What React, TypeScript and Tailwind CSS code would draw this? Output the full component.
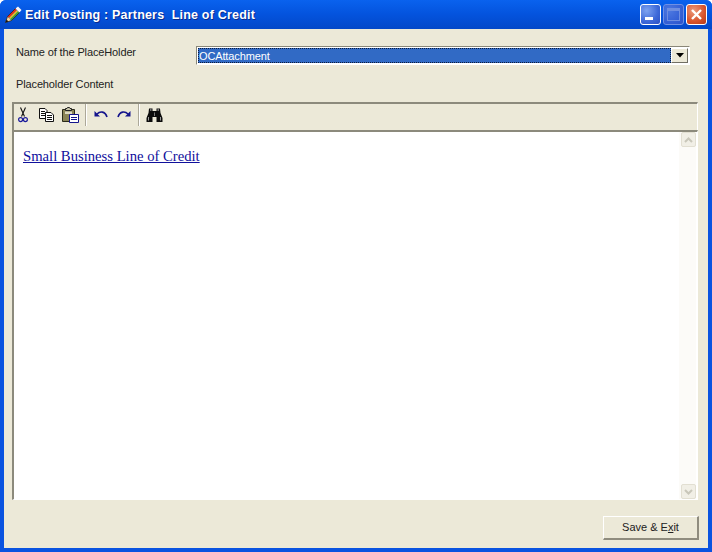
import React from "react";

const sans = "font-['Liberation_Sans',Arial,sans-serif]";

function PencilIcon() {
  return (
    <svg width="17" height="17" viewBox="0 0 17 17" className="shrink-0">
      <path d="M0.5 16.5 L2.5 10.5 L6.5 14.5 Z" fill="#f3d6a6" />
      <path d="M2.5 10.5 L10.5 2.5 L12 4 L4 12 Z" fill="#e5301a" />
      <path d="M4 12 L12 4 L13.2 5.2 L5.2 13.2 Z" fill="#f4c31c" />
      <path d="M5.2 13.2 L13.2 5.2 L14.5 6.5 L6.5 14.5 Z" fill="#3fa63a" />
      <path d="M10.5 2.5 L13 0.5 L16.5 4 L14.5 6.5 Z" fill="#f6f6f6" />
      <path d="M0.5 16.5 L1.5 13.5 L3.5 15.5 Z" fill="#111111" />
      <path d="M0.5 16.5 L2.5 10.5 L10.5 2.5 M0.5 16.5 L6.5 14.5 L14.5 6.5" stroke="#2a2010" strokeWidth="0.7" fill="none" />
    </svg>
  );
}

function CaptionButton({ kind }: { kind: "min" | "max" | "close" }) {
  if (kind === "close") {
    return (
      <div className="w-[21px] h-[21px] rounded-[3px] border border-white bg-[radial-gradient(circle_at_35%_30%,#eb9a7c,#d8532c_60%,#b53a18)] flex items-center justify-center">
        <svg width="13" height="13" viewBox="0 0 13 13">
          <path d="M2 2 L11 11 M11 2 L2 11" stroke="#ffffff" strokeWidth="2.4" />
        </svg>
      </div>
    );
  }
  if (kind === "min") {
    return (
      <div className="w-[21px] h-[21px] rounded-[3px] border border-white bg-[radial-gradient(circle_at_30%_30%,#7ea3f0,#3c68d8_60%,#2a50c4)] flex items-end pl-[4px] pb-[4px]">
        <div className="w-[8px] h-[3px] bg-white" />
      </div>
    );
  }
  return (
    <div className="w-[21px] h-[21px] rounded-[3px] border border-[#6f90e4] bg-[radial-gradient(circle_at_30%_30%,#4d78e0,#3561d6_60%,#2b52c8)] flex items-center justify-center">
      <div className="w-[13px] h-[13px] border border-[#6f8ee0] border-t-[3px]" />
    </div>
  );
}

function CutIcon() {
  return (
    <svg width="10" height="16" viewBox="0 0 10 16">
      <path d="M2.5 0.5 L6.5 9.5 M7.5 0.5 L3.5 9.5" stroke="#111111" strokeWidth="1.1" fill="none" />
      <circle cx="2.6" cy="12.6" r="2" stroke="#1c1c9c" strokeWidth="1.2" fill="none" />
      <circle cx="7.4" cy="12.6" r="2" stroke="#1c1c9c" strokeWidth="1.2" fill="none" />
    </svg>
  );
}

function CopyIcon() {
  return (
    <svg width="15" height="14" viewBox="0 0 15 14">
      <path d="M0.5 0.5 H6 L8 2.5 V10.5 H0.5 Z" fill="#ffffff" stroke="#111111" />
      <path d="M2 3.5 H6 M2 5.5 H6 M2 7.5 H6" stroke="#111111" />
      <path d="M6.5 4.5 H12 L14.5 7 V13.5 H6.5 Z" fill="#ffffff" stroke="#111111" />
      <path d="M8 7.5 H13 M8 9.5 H13 M8 11.5 H13" stroke="#111111" />
    </svg>
  );
}

function PasteIcon() {
  return (
    <svg width="17" height="16" viewBox="0 0 17 16">
      <path d="M0.5 2.5 H12.5 V14.5 H0.5 Z" fill="#8a8456" stroke="#2a2a18" />
      <path d="M3.5 3.5 V1.5 H5 L5.5 0.5 H7.5 L8 1.5 H9.5 V3.5 Z" fill="#c8c4a8" stroke="#222222" />
      <path d="M3 4.5 H10 V7 H3 Z" fill="#ddd9c0" />
      <path d="M7.5 7.5 H16.5 V15.5 H7.5 Z" fill="#ffffff" stroke="#14148c" />
      <path d="M9 10.5 H15 M9 12.5 H15" stroke="#14148c" />
    </svg>
  );
}

function UndoIcon({ flip }: { flip?: boolean }) {
  return (
    <svg width="14" height="10" viewBox="0 0 14 10" className={flip ? "-scale-x-100" : ""}>
      <path d="M3 4 C6 1 11 1 13 7" stroke="#14148c" strokeWidth="1.6" fill="none" />
      <path d="M0.5 1 L6 6.5 H0.5 Z" fill="#14148c" />
    </svg>
  );
}

function FindIcon() {
  return (
    <svg width="17" height="15" viewBox="0 0 17 15">
      <path d="M3 0.5 H6.5 V3 H10.5 V0.5 H14 L14.5 5 L16.5 10 V14 H10.5 V9 H6.5 V14 H0.5 V10 L2.5 5 Z" fill="#0c0c0c" />
      <path d="M8 4.5 H9 V8 H8 Z" fill="#777777" />
      <path d="M2.5 9 V12.5 M14.5 9 V12.5" stroke="#9a9a9a" />
      <path d="M4 2 H5.5 M11.5 2 H13" stroke="#dddddd" />
    </svg>
  );
}

function ScrollArrow({ up }: { up?: boolean }) {
  return (
    <div className="w-[15px] h-[15px] bg-[#f1efe6] border border-[#e2dfd2] rounded-[2px] flex items-center justify-center">
      <svg width="9" height="6" viewBox="0 0 9 6" className={up ? "" : "rotate-180"}>
        <path d="M1 5 L4.5 1.5 L8 5" stroke="#c9c7ba" strokeWidth="2" fill="none" />
      </svg>
    </div>
  );
}

function Sep() {
  return <div className="w-[2px] h-[22px] border-l border-r border-l-[#aca899] border-r-white" />;
}

export default function App() {
  return (
    <div className={`w-[712px] h-[552px] flex flex-col overflow-hidden rounded-t-[6px] bg-[#0a53e0] ${sans}`}>
      <div className="h-[29px] shrink-0 flex items-center pl-[5px] pr-[5px] bg-gradient-to-b from-[#0a62ee] via-[#0453dd] to-[#0348c8]">
        <PencilIcon />
        <span className="ml-[3px] text-white font-bold text-[12.5px] whitespace-pre tracking-[0.2px] flex-1 pt-[2px] [text-shadow:1px_1px_#0a2a8c]">
          Edit Posting : Partners  Line of Credit
        </span>
        <div className="flex gap-[2px]">
          <CaptionButton kind="min" />
          <CaptionButton kind="max" />
          <CaptionButton kind="close" />
        </div>
      </div>

      <div className="flex-1 mx-[4px] mb-[4px] bg-[#ece9d8] flex flex-col min-h-0">
        <div className="mt-[17px] flex items-start pl-[12px] pr-[18px]">
          <span className="w-[180px] text-[11px] tracking-[-0.13px] leading-[12px] text-[#222222]">Name of the PlaceHolder</span>
          <div className="flex-1 h-[19px] bg-white border border-t-[#8a8778] border-l-[#8a8778] border-r-white border-b-white p-[1px] flex">
            <div className="flex-1 bg-[#316ac5] border border-dotted border-[#0c1c3c] text-white text-[11px] tracking-[-0.13px] leading-[14px]">
              OCAttachment
            </div>
            <div className="w-[17px] bg-[#ece9d8] border border-t-white border-l-white border-r-[#716f64] border-b-[#716f64] flex items-center justify-center">
              <svg width="8" height="5" viewBox="0 0 8 5">
                <path d="M0 0 H8 L4 4.5 Z" fill="#000000" />
              </svg>
            </div>
          </div>
        </div>

        <div className="mt-[11px] pl-[12px] text-[11px] tracking-[-0.13px] text-[#222222] leading-[16px]">Placeholder Content</div>

        <div className="mt-[10px] ml-[8px] mr-[10px] flex-1 flex flex-col min-h-0">
          <div className="h-[28px] shrink-0 flex items-center pl-[4px] pb-[4px] border-t-2 border-t-[#8c8a7c] border-l-2 border-l-[#8c8a7c] border-r border-r-white">
            <CutIcon />
            <div className="ml-[11px]"><CopyIcon /></div>
            <div className="ml-[8px]"><PasteIcon /></div>
            <div className="ml-[6px]"><Sep /></div>
            <div className="ml-[7px]"><UndoIcon /></div>
            <div className="ml-[9px]"><UndoIcon flip /></div>
            <div className="ml-[7px]"><Sep /></div>
            <div className="ml-[6px]"><FindIcon /></div>
          </div>

          <div className="flex-1 min-h-0 flex bg-white border-t-2 border-t-[#8c8a7c] border-l-2 border-l-[#8c8a7c] border-r border-r-white border-b border-b-white">
            <div className="flex-1 pl-[9px] pt-[15px] font-['Liberation_Serif','Times_New_Roman',serif] text-[14.67px] leading-[18px]">
              <a href="#" className="text-[#10109c] underline">
                Small Business Line of Credit
              </a>
            </div>
            <div className="w-[17px] mr-[1px] bg-[#fcfbf8] flex flex-col justify-between items-center pl-[1px]">
              <ScrollArrow up />
              <ScrollArrow />
            </div>
          </div>
        </div>

        <div className="h-[48px] shrink-0 flex items-start justify-end pt-[16px] pr-[9px]">
          <button className="w-[96px] h-[24px] bg-[#ece9d8] border border-t-white border-l-white border-r-2 border-b-2 border-r-[#8f8c7e] border-b-[#8f8c7e] text-[11px] text-[#222222]">
            Save &amp; E<span className="underline">x</span>it
          </button>
        </div>
      </div>
    </div>
  );
}
